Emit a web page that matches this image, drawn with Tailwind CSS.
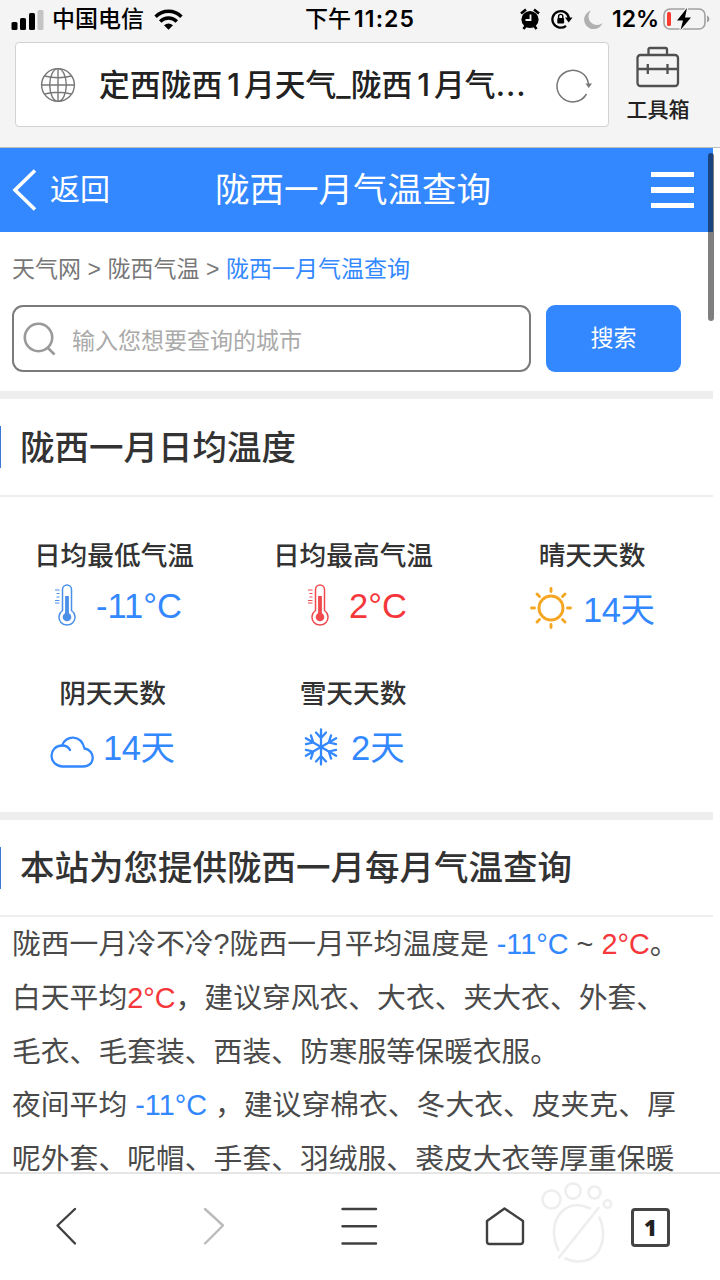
<!DOCTYPE html>
<html lang="zh-CN">
<head>
  <meta charset="UTF-8" />
  <meta name="viewport" content="width=device-width, initial-scale=1.0"/>
  <title>陇西一月气温查询</title>
  <script src="https://cdn.jsdelivr.net/npm/@tailwindcss/browser@4"></script>
</head>
<body class="relative flex h-[1280px] w-[720px] flex-col overflow-hidden bg-white font-['Liberation_Sans','Noto_Sans_CJK_SC',sans-serif] text-[#333]">

  <!-- Browser top -->
  <div class="h-[148px] shrink-0 border-b border-[#bdbdbd] bg-[#f4f4f4] font-['Inter','Noto_Sans_CJK_SC',sans-serif] text-black">

    <!-- Status bar -->
    <div class="flex h-[38px] items-center pl-[11px] pr-[9px] text-[23px] font-medium">
      <svg class="mt-[1px] h-[20px] w-[33px] shrink-0" viewBox="0 0 33 20">
        <rect x="0.5" y="12" width="6" height="8" rx="1.5"/>
        <rect x="9" y="8" width="6" height="12" rx="1.5"/>
        <rect x="18" y="3" width="6" height="17" rx="1.5"/>
        <rect x="26.500" y="0" width="6" height="20" rx="1.500" fill="#c4c4c4"/>
      </svg>
      <span class="ml-[8px] w-[93px] whitespace-nowrap leading-[38px]">中国电信</span>
      <svg class="ml-[9px] h-[21px] w-[29px] shrink-0" viewBox="0 0 29 21" fill="none" stroke="#000" stroke-width="3.500">
        <path d="M1.600 7.800C9 .5 20 .5 27.400 7.800"/>
        <path d="M6.200 12.400C11 7.800 18 7.800 22.800 12.400"/>
        <path d="M10 16.200Q14.500 12.600 19 16.200L14.500 20.700Z" fill="#000" stroke="none"/>
      </svg>
      <span class="ml-[122px] w-[120px] whitespace-nowrap leading-[38px]">下午<span class="ml-[3px] font-semibold tracking-[1.1px]">11:25</span></span>
      <svg class="ml-[95px] h-[22px] w-[20px] shrink-0" viewBox="0 0 20 22">
        <circle cx="10" cy="11.500" r="8.600"/>
        <path d="M1 5.500L6 1.500M19 5.500L14 1.500M3.500 21L6 17.500M16.500 21L14 17.500" stroke="#000" stroke-width="2.600"/>
        <path d="M10.500 6.500V12H5.500" stroke="#f4f4f4" stroke-width="1.800" fill="none"/>
      </svg>
      <svg class="ml-[11px] h-[20px] w-[22px] shrink-0" viewBox="0 0 22 20" fill="none" stroke="#000">
        <path d="M15 16.800A8.300 8.300 0 1 1 17.900 9" stroke-width="2.300"/>
        <path d="M14 8.500H21.500L17.700 13.500Z" fill="#000" stroke="none"/>
        <rect x="6.300" y="9" width="6.800" height="5.400" rx="1" fill="#000" stroke="none"/>
        <path d="M7.600 9.500V7.500A2.100 2.100 0 0 1 11.800 7.500V9.500" stroke-width="1.400"/>
      </svg>
      <svg class="ml-[11px] h-[19px] w-[19px] shrink-0" viewBox="0 0 19 19">
        <path d="M7 .5A9.500 9.500 0 1 0 18.500 13A8.500 8.500 0 0 1 7 .5Z" fill="#b0b0b0"/>
      </svg>
      <span class="ml-[9px] w-[47px] whitespace-nowrap font-semibold leading-[38px]">12%</span>
      <svg class="ml-[4px] h-[24px] w-[47px] shrink-0" viewBox="0 0 47 24">
        <rect x="1" y="2" width="41" height="20" rx="6" fill="none" stroke="#a0a0a0" stroke-width="1.600"/>
        <rect x="4" y="5" width="4" height="14" rx="1.500" fill="#fa3b30"/>
        <path d="M44 8.500Q46.500 9.500 46.500 12T44 15.500Z" fill="#a0a0a0"/>
        <path d="M24 1L14 13.500H20L17.500 23L28 10.500H22Z" stroke="#f4f4f4" stroke-width="2.500" paint-order="stroke"/>
      </svg>
    </div>

    <!-- Address bar -->
    <div class="flex pl-[15px] pt-[4px]">
      <div class="flex h-[85px] w-[594px] items-center rounded-[4px] border border-[#d2d2d2] bg-white">
        <svg class="ml-[24px] h-[36px] w-[36px] shrink-0" viewBox="0 0 36 36" fill="none" stroke="#777" stroke-width="1.400">
          <circle cx="18" cy="18" r="16.400"/>
          <ellipse cx="18" cy="18" rx="8.300" ry="16.400"/>
          <path d="M18 1.600V34.400M1.600 18H34.400M4.500 9Q18 12.500 31.500 9M4.500 27Q18 23.500 31.500 27"/>
        </svg>
        <span class="ml-[23px] w-[431px] whitespace-nowrap text-[30.800px] font-medium leading-[80px] text-[#222]">定西陇西<span class="ml-[5px] mr-[4px]">1</span>月天气_陇西<span class="ml-[5px] mr-[4px]">1</span>月气<span class="tracking-[1px]">...</span></span>
        <svg class="ml-[25px] h-[36px] w-[38px] shrink-0" viewBox="0 0 38 36" fill="none" stroke="#777" stroke-width="1.500">
          <path d="M31.500 27A15.800 15.800 0 1 1 33.500 17"/>
          <path d="M30.500 16.500H37L33.700 21Z" fill="#777" stroke="none"/>
        </svg>
      </div>
      <div class="ml-[16px] flex w-[66px] flex-col items-center text-[#222]">
        <svg class="mt-[4px] h-[42px] w-[44px]" viewBox="0 0 44 42" fill="none" stroke="#505050" stroke-width="2.300">
          <rect x="1.500" y="9" width="40.500" height="31" rx="3"/>
          <path d="M12.500 9V3.500Q12.500 2 14 2H29.500Q31 2 31 3.500V9M1.500 23H42M11.800 18V28M31.500 18V28"/>
        </svg>
        <span class="mt-[6px] whitespace-nowrap text-[21px] font-medium leading-[32px]">工具箱</span>
      </div>
    </div>
  </div>

  <!-- Page -->
  <main class="h-[1024px] w-[713px] shrink-0 overflow-hidden">
    <header class="flex h-[84px] items-center bg-[#3388ff] text-white">
      <svg class="ml-[12px] h-[42px] w-[25px] shrink-0" viewBox="0 0 25 42" fill="none" stroke="#fff" stroke-width="3.600">
        <path d="M23 1.500L3 21L23 40.500"/>
      </svg>
      <span class="ml-[13px] w-[62px] whitespace-nowrap text-[30px] leading-[80px]">返回</span>
      <h1 class="ml-[103px] w-[280px] whitespace-nowrap text-[34.500px] leading-[80px]">陇西一月气温查询</h1>
      <div class="ml-[156px] flex w-[43px] flex-col gap-[10px]">
        <i class="h-[5.300px] bg-white"></i>
        <i class="h-[5.300px] bg-white"></i>
        <i class="h-[5.300px] bg-white"></i>
      </div>
    </header>

    <nav class="flex h-[73px] items-center gap-[6.500px] pl-[12px] pt-[1px] text-[23px] text-[#777]">
      <a>天气网</a><span>&gt;</span><a>陇西气温</a><span>&gt;</span><a class="text-[#3388ff]">陇西一月气温查询</a>
    </nav>

    <div class="flex h-[86px] gap-[15px] pl-[12px]">
      <div class="flex h-[67px] w-[519px] items-center rounded-[11px] border-2 border-[#7b7b7b]">
        <svg class="ml-[9px] h-[34px] w-[34px] shrink-0" viewBox="0 0 34 34" fill="none" stroke="#999" stroke-width="2.600">
          <circle cx="15.500" cy="15.500" r="13.700"/>
          <path d="M24.500 25.500L31.500 32.500"/>
        </svg>
        <span class="ml-[15px] mt-[6px] text-[23px] text-[#aaa]">输入您想要查询的城市</span>
      </div>
      <button class="h-[67px] w-[135px] rounded-[9px] bg-[#3388ff] text-[23px] text-white">搜索</button>
    </div>

    <!-- Daily averages -->
    <section class="border-t-8 border-[#eee]">
      <div class="flex h-[98px] items-center border-b-2 border-[#eee]">
        <i class="h-[42px] w-[1px] bg-[#3b78d8]"></i>
        <h2 class="ml-[19px] mt-[2px] text-[34.500px] font-medium leading-[60px]">陇西一月日均温度</h2>
      </div>
      <div class="grid h-[315px] grid-cols-[228px_250px_228px] grid-rows-[138px_138px] pt-[39px] text-center">
        <div>
          <h3 class="text-[26.700px] font-medium leading-[40px]">日均最低气温</h3>
          <div class="mt-[6px] flex items-center pl-[54px] text-[34.500px] leading-[48px] text-[#3388ff]">
            <svg class="-mt-[2px] h-[42px] w-[22px]" viewBox="0 0 22 42" fill="none" stroke="#4a8fe8" stroke-width="1.500">
              <path d="M8.500 26.500V5.500A4.500 4.500 0 0 1 17.500 5.500V26.500A8 8 0 1 1 8.500 26.500Z"/>
              <path d="M13 12V30" stroke-width="3.800"/>
              <circle cx="13" cy="33" r="4.300" fill="#4a8fe8" stroke="none"/>
              <path d="M1 6H5.500M2.500 9.500H5.500M2.500 13H5.500M1 16.500H5.500M1 19H5.500" stroke-width="1.100"/>
            </svg>
            <span class="ml-[20px]">-11°C</span>
          </div>
        </div>
        <div>
          <h3 class="text-[26.700px] font-medium leading-[40px]">日均最高气温</h3>
          <div class="mt-[6px] flex items-center pl-[79px] text-[34.500px] leading-[48px] text-[#f5373b]">
            <svg class="-mt-[2px] h-[42px] w-[22px]" viewBox="0 0 22 42" fill="none" stroke="#f04a4e" stroke-width="1.500">
              <path d="M8.500 26.500V5.500A4.500 4.500 0 0 1 17.500 5.500V26.500A8 8 0 1 1 8.500 26.500Z"/>
              <path d="M13 12V30" stroke-width="3.800"/>
              <circle cx="13" cy="33" r="4.300" fill="#f04a4e" stroke="none"/>
              <path d="M1 6H5.500M2.500 9.500H5.500M2.500 13H5.500M1 16.500H5.500M1 19H5.500" stroke-width="1.100"/>
            </svg>
            <span class="ml-[20px]">2°C</span>
          </div>
        </div>
        <div>
          <h3 class="text-[26.700px] font-medium leading-[40px]">晴天天数</h3>
          <div class="mt-[7px] flex items-center pl-[51px] text-[34.500px] leading-[48px] text-[#3388ff]">
            <svg class="-mt-[1px] h-[44px] w-[44px]" viewBox="0 0 44 44" fill="none" stroke="#f5a623" stroke-width="2.900" stroke-linecap="round">
              <circle cx="22" cy="22" r="12"/>
              <path d="M22 2.500V5.500M22 38.500V41.500M2.500 22H5.500M38.500 22H41.500M8 8L10.500 10.500M33.500 33.500L36 36M36 8L33.500 10.500M10.500 33.500L8 36"/>
            </svg>
            <span class="ml-[10px] mt-[3px] tracking-[-0.400px]">14天</span>
          </div>
        </div>
        <div class="pr-[3px]">
          <h3 class="text-[26.700px] font-medium leading-[40px]">阴天天数</h3>
          <div class="mt-[7px] flex items-center pl-[50px] text-[34.500px] leading-[48px] text-[#3388ff]">
            <svg class="mt-[11px] h-[32px] w-[44px]" viewBox="0 0 44 32" fill="none" stroke="#3388ff" stroke-width="2.300" stroke-linecap="round">
              <path d="M12 30.500H33C46 30.500 45.500 14 34.500 12.500C31-2 15.500-1 12 9.500C-1.500 10-2.500 28.500 12 30.500Z"/>
              <path d="M12 9.500Q18 9.500 20 14"/>
            </svg>
            <span class="ml-[9px] mt-[3px] tracking-[-0.400px]">14天</span>
          </div>
        </div>
        <div>
          <h3 class="text-[26.700px] font-medium leading-[40px]">雪天天数</h3>
          <div class="mt-[7px] flex items-center pl-[74px] text-[34.500px] leading-[48px] text-[#3388ff]">
            <svg class="h-[40px] w-[38px]" viewBox="-19 -20 38 40" fill="none" stroke="#3388ff" stroke-width="2.300" stroke-linecap="round">
              <path id="arm" d="M0 0V-17.500M-5-14.500L0-9L5-14.500"/>
              <use href="#arm" transform="rotate(60)"/>
              <use href="#arm" transform="rotate(120)"/>
              <use href="#arm" transform="rotate(180)"/>
              <use href="#arm" transform="rotate(240)"/>
              <use href="#arm" transform="rotate(300)"/>
            </svg>
            <span class="ml-[11px] mt-[3px]">2天</span>
          </div>
        </div>
      </div>
    </section>

    <!-- Clothing advice -->
    <section class="border-t-8 border-[#eee]">
      <div class="flex h-[97px] items-center border-b-2 border-[#eee]">
        <i class="h-[42px] w-[1px] bg-[#3b78d8]"></i>
        <h2 class="ml-[19px] text-[34.500px] font-medium leading-[60px]">本站为您提供陇西一月每月气温查询</h2>
      </div>
      <div class="whitespace-nowrap pl-[12px] pt-[1px] text-[28.800px] leading-[53.800px] text-[#4a4a4a]">
        <p>陇西一月冷不冷?陇西一月平均温度是 <span class="text-[#3388ff]">-11°C</span> ~ <span class="text-[#f5373b]">2°C</span>。</p>
        <p>白天平均<span class="text-[#f5373b]">2°C</span>，建议穿风衣、大衣、夹大衣、外套、</p>
        <p>毛衣、毛套装、西装、防寒服等保暖衣服。</p>
        <p>夜间平均 <span class="text-[#3388ff]">-11°C</span> ，建议穿棉衣、冬大衣、皮夹克、厚</p>
        <p>呢外套、呢帽、手套、羽绒服、裘皮大衣等厚重保暖</p>
      </div>
    </section>
  </main>

  <!-- Scroll indicator -->
  <div class="absolute left-[708px] top-[153px] h-[168px] w-[6px] rounded-full bg-black/50"></div>

  <!-- Browser toolbar -->
  <footer class="flex h-[108px] shrink-0 items-center border-t-2 border-[#e6e6e6] bg-white">
    <svg class="h-[106px] w-[630px] shrink-0" viewBox="0 1174 630 106" fill="none" stroke="#404040" stroke-width="2.400" stroke-linecap="round" stroke-linejoin="round">
      <path d="M75 1209L57.500 1225.500L75 1243.500"/>
      <path d="M205 1209L223 1225.500L205 1243.500" stroke="#bbb"/>
      <path d="M342.500 1209H376M342.500 1226.200H376M342.500 1243.500H376"/>
      <path d="M504.500 1208.500L523 1221V1241.500Q523 1244 520.500 1244H489.500Q487 1244 487 1241.500V1221Z"/>
      <g stroke="#eee" stroke-width="2.600">
        <circle cx="551.500" cy="1199.500" r="9"/>
        <circle cx="573" cy="1191" r="7.600"/>
        <circle cx="594.500" cy="1192.500" r="6"/>
        <circle cx="607.500" cy="1204" r="3.700"/>
        <path d="M590 1208.500C567 1198 553 1216 554 1234Q555 1244 558.500 1250M598.500 1208L559 1257.500M599.500 1217.500C607 1235 602 1253 590 1259Q577 1264.500 565.500 1258.500"/>
      </g>
    </svg>
    <div class="ml-[1px] flex h-[39px] w-[39px] items-center justify-center rounded-[4px] border-[3px] border-[#444] font-['Open_Sans',sans-serif] text-[22px] font-extrabold text-[#222]">1</div>
  </footer>
</body>
</html>
